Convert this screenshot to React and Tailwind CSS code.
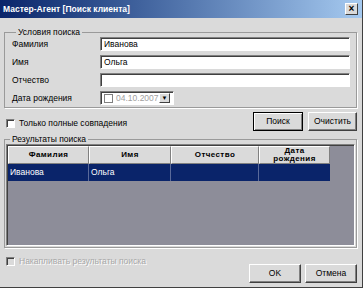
const FONT = "font-['Liberation_Sans',Arial,sans-serif]"

const BTN =
  "flex h-[19px] items-center justify-center border bg-[#dadada] text-[8.5px] text-black"

const RAISED =
  "border-t-white border-l-white border-r-[#404040] border-b-[#404040] shadow-[inset_-1px_-1px_0_#808080]"

const INPUT =
  "h-[14px] border border-t-[#808080] border-l-[#808080] border-r-white border-b-white bg-white shadow-[inset_1px_1px_0_#404040] px-[3px] text-[8.5px] leading-[12px] text-black"

function Check({ disabled, label }) {
  return (
    <div className="flex items-center">
      <span
        className={
          "h-[9px] w-[9px] border border-t-[#808080] border-l-[#808080] border-r-white border-b-white shadow-[inset_1px_1px_0_#404040] " +
          (disabled ? "bg-[#dadada]" : "bg-white")
        }
      />
      <span
        className={
          "ml-[4px] text-[8.5px] leading-[10px] " +
          (disabled ? "text-[#a8a8a8] [text-shadow:1px_1px_0_#fff]" : "text-black")
        }
      >
        {label}
      </span>
    </div>
  )
}

function Row({ label, children }) {
  return (
    <div className="flex h-[18px] items-center">
      <span className="w-[88px] text-[8.5px] text-black">{label}</span>
      {children}
    </div>
  )
}

const HEAD =
  "flex h-full items-center justify-center border border-t-white border-l-white border-r-[#808080] border-b-[#808080] bg-[#dadada] text-center text-[8px] font-bold leading-[8px] tracking-[0.4px] text-black"

export default function App() {
  return (
    <div className={`flex h-[288px] w-[363px] flex-col overflow-hidden border-r border-b border-r-[#404040] border-b-[#404040] bg-[#dadada] ${FONT}`}>
      <div className="flex h-[18px] shrink-0 items-center justify-between bg-gradient-to-r from-[#0a246a] to-[#a6caf0] pl-[3px] pr-[4px]">
        <span className="text-[8.5px] font-bold text-white">Мастер-Агент [Поиск клиента]</span>
        <span className="flex h-[12px] w-[13px] items-center justify-center border border-t-white border-l-white border-r-[#404040] border-b-[#404040] bg-[#dadada] text-[10px] font-bold leading-none text-black">
          ×
        </span>
      </div>

      <fieldset className="ml-[4px] mt-[9px] w-[353px] border border-[#9a9a9a] pl-[7px] pr-[6px] shadow-[1px_1px_0_#fff]">
        <legend className="ml-[4px] px-[2px] text-[8.5px] leading-[10px] text-black">Условия поиска</legend>
        <div className="-mt-[2px] flex flex-col">
          <Row label="Фамилия">
            <div className={INPUT + " flex-1"}>Иванова</div>
          </Row>
          <Row label="Имя">
            <div className={INPUT + " flex-1"}>Ольга</div>
          </Row>
          <Row label="Отчество">
            <div className={INPUT + " flex-1"} />
          </Row>
          <Row label="Дата рождения">
            <div className={INPUT + " flex w-[74px] items-center px-[1px]"}>
              <span className="h-[9px] w-[9px] border border-[#808080] bg-white" />
              <span className="ml-[3px] flex-1 text-[8.5px] text-[#a0a0a0]">04.10.2007</span>
              <span className="flex h-[10px] w-[11px] items-center justify-center border border-t-white border-l-white border-r-[#404040] border-b-[#404040] bg-[#dadada] text-[6px] leading-none text-black">
                ▼
              </span>
            </div>
          </Row>
        </div>
      </fieldset>

      <div className="mt-[4px] flex items-center justify-between pl-[6px] pr-[5px]">
        <div className="pt-[3px]">
          <Check label="Только полные совпадения" />
        </div>
        <div className="flex gap-[5px]">
          <div className={BTN + " w-[50px] border-black shadow-[inset_1px_1px_0_#fff,inset_-1px_-1px_0_#808080]"}>Поиск</div>
          <div className={BTN + " w-[49px] " + RAISED}>Очистить</div>
        </div>
      </div>

      <fieldset className="ml-[4px] mt-[3px] w-[353px] border border-[#9a9a9a] px-[1px] pb-[1px] shadow-[1px_1px_0_#fff]">
        <legend className="ml-[4px] px-[2px] text-[8.5px] leading-[10px] text-black">Результаты поиска</legend>
        <div className="flex h-[102px] flex-col border border-t-[#808080] border-l-[#808080] border-r-white border-b-white bg-[#8d8d99] shadow-[inset_1px_1px_0_#404040]">
          <div className="ml-[1px] mt-[1px] flex h-[18px]">
            <div className={HEAD + " w-[81px]"}>Фамилия</div>
            <div className={HEAD + " w-[82px]"}>Имя</div>
            <div className={HEAD + " w-[88px]"}>Отчество</div>
            <div className={HEAD + " w-[71px]"}>
              Дата
              <br />
              рождения
            </div>
          </div>
          <div className="ml-[1px] flex h-[17px] w-[322px] bg-[#0a246a] text-[8.5px] text-white">
            <div className="flex w-[81px] items-center border-r border-r-[#5a6a9a] pl-[2px]">Иванова</div>
            <div className="flex w-[82px] items-center border-r border-r-[#5a6a9a] pl-[2px]">Ольга</div>
            <div className="w-[88px] border-r border-r-[#5a6a9a]" />
            <div className="w-[71px]" />
          </div>
        </div>
      </fieldset>

      <div className="flex flex-1 justify-between pl-[6px] pr-[5px]">
        <div className="pt-[8px]">
          <Check disabled label="Накапливать результаты поиска" />
        </div>
        <div className="flex gap-[4px] pt-[16px]">
          <div className={BTN + " w-[52px] " + RAISED}>OK</div>
          <div className={BTN + " w-[52px] " + RAISED}>Отмена</div>
        </div>
      </div>
    </div>
  )
}
